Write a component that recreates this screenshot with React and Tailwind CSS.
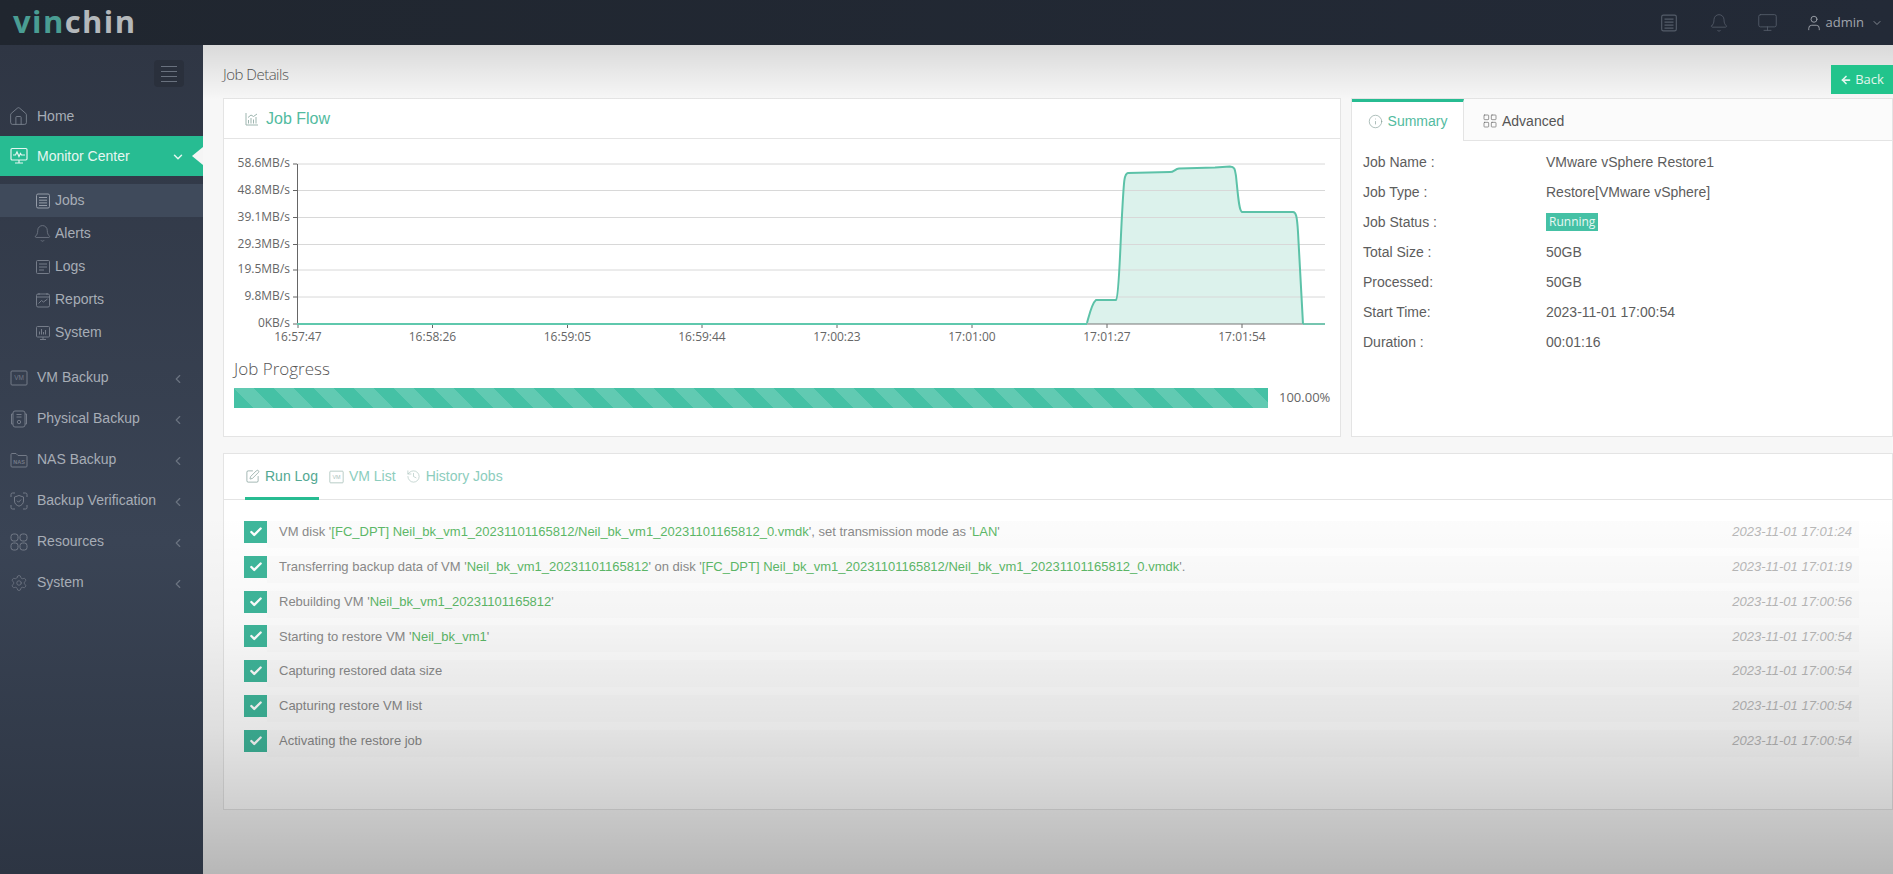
import {
  House, Bell, Settings, ChevronDown, ChevronLeft, User, Monitor, Info, LayoutGrid, SquarePen, History, ArrowLeft, Check,
} from "lucide-react"

const GRID_Y = [164, 190.5, 217.5, 244.5, 270, 297, 324]
const Y_LABELS = ["58.6MB/s", "48.8MB/s", "39.1MB/s", "29.3MB/s", "19.5MB/s", "9.8MB/s", "0KB/s"]
const X_LABELS = [
  ["16:57:47", 298], ["16:58:26", 432.5], ["16:59:05", 567.5], ["16:59:44", 702], ["17:00:23", 837], ["17:01:00", 972], ["17:01:27", 1107], ["17:01:54", 1242],
]

const CURVE = "M1087 323 C1090 312 1092 303 1096 300 L1116 300 C1119 298 1120 250 1122 215 C1124 180 1124 174 1128 173 L1170 172 C1174 172 1175 169 1179 168.5 L1215 167.5 L1230 166.5 C1235 166.5 1235 170 1236 176 C1238 195 1239 211 1242 212 L1293 212 C1296 212 1297 216 1298 232 L1303 324"

function JobsIcon({ className }) {
  return (
    <svg viewBox="0 0 16 16" fill="none" stroke="currentColor" strokeWidth="1" className={className}>
      <rect x="1.5" y="1" width="13" height="14" rx="1.5" />
      <path d="M4 4.5h8M4 7.2h8M4 9.9h8M4 12.5h8" />
    </svg>
  )
}

function LogsIcon({ className }) {
  return (
    <svg viewBox="0 0 16 16" fill="none" stroke="currentColor" strokeWidth="1" className={className}>
      <rect x="1.5" y="1.5" width="13" height="13" rx="1" />
      <path d="M4 5h8M4 8h8M4 11h5" />
    </svg>
  )
}

function ReportsIcon({ className }) {
  return (
    <svg viewBox="0 0 16 16" fill="none" stroke="currentColor" strokeWidth="1" className={className}>
      <rect x="1.5" y="2" width="13" height="13" rx="1.5" />
      <path d="M1.5 5h13M4 1v2M12 1v2M3.5 11.5l3-3 2 1.5 4-3" />
    </svg>
  )
}

function SystemSmallIcon({ className }) {
  return (
    <svg viewBox="0 0 16 16" fill="none" stroke="currentColor" strokeWidth="1" className={className}>
      <rect x="1.5" y="1.5" width="13" height="10.5" rx="1" />
      <path d="M8 12v2.5M5 14.5h6M4.5 9.5V6.5M6.5 9.5V4M8.5 9.5V7M10.5 9.5V5" />
    </svg>
  )
}

function MonitorPulse({ className }) {
  return (
    <svg viewBox="0 0 18 18" fill="none" stroke="currentColor" strokeWidth="1.2" className={className}>
      <rect x="1" y="1.5" width="16" height="11.5" rx="1.2" />
      <path d="M9 13v2.5M5 16h8M3 8h2.5l1.5-3 2 4.5 1.5-3 1 1.5h3.5" />
    </svg>
  )
}

function VmIcon({ className }) {
  return (
    <svg viewBox="0 0 18 16" fill="none" stroke="currentColor" strokeWidth="1" className={className}>
      <rect x="1" y="1" width="16" height="14" rx="1" />
      <text x="9" y="10.2" textAnchor="middle" fontSize="6.5" fontFamily="Liberation Sans" fill="currentColor" stroke="none">VM</text>
    </svg>
  )
}

function PhysicalIcon({ className }) {
  return (
    <svg viewBox="0 0 18 18" fill="none" stroke="currentColor" strokeWidth="1" className={className}>
      <rect x="3" y="1" width="12" height="16" rx="2" />
      <path d="M3 4H1.5v10H3M15 4h1.5v10H15M6.5 4.5h5M6.5 7h5" />
      <circle cx="9" cy="12" r="1.7" />
    </svg>
  )
}

function NasIcon({ className }) {
  return (
    <svg viewBox="0 0 18 16" fill="none" stroke="currentColor" strokeWidth="1" className={className}>
      <path d="M1 14V2.5A1 1 0 0 1 2 1.5h4l2 2h8a1 1 0 0 1 1 1V14a1 1 0 0 1-1 1H2a1 1 0 0 1-1-1z" />
      <text x="9" y="11.5" textAnchor="middle" fontSize="5.5" fontWeight="700" fontFamily="Liberation Sans" fill="currentColor" stroke="none">NAS</text>
    </svg>
  )
}

function VerifyIcon({ className }) {
  return (
    <svg viewBox="0 0 18 18" fill="none" stroke="currentColor" strokeWidth="1" className={className}>
      <path d="M1 5V2.5A1.5 1.5 0 0 1 2.5 1H5M13 1h2.5A1.5 1.5 0 0 1 17 2.5V5M17 13v2.500a1.5 1.5 0 0 1-1.5 1.5H13M5 17H2.5A1.5 1.5 0 0 1 1 15.5V13" />
      <path d="M9 3.5l4.5 1.5v4c0 2.800-2 4.300-4.500 5.200C6.500 13.300 4.500 11.800 4.500 9V5z" />
      <path d="M7 8.700l1.500 1.500 2.700-2.700" />
    </svg>
  )
}

function ResourcesIcon({ className }) {
  return (
    <svg viewBox="0 0 18 18" fill="none" stroke="currentColor" strokeWidth="1" className={className}>
      <rect x="1" y="1" width="7" height="7" rx="2.5" />
      <rect x="10" y="1" width="7" height="7" rx="2.5" />
      <rect x="1" y="10" width="7" height="7" rx="2.5" />
      <rect x="10" y="10" width="7" height="7" rx="2.5" />
    </svg>
  )
}

function FlowIcon({ className }) {
  return (
    <svg viewBox="0 0 14 14" fill="none" stroke="currentColor" strokeWidth="1" className={className}>
      <path d="M1 1v12h12" />
      <path d="M3.5 11.5V8M6 11.5V6M8.5 11.5V7.5M11 11.5V5" />
      <path d="M3 5.5l3-2.500 2.500 1.500L12 2" />
    </svg>
  )
}

function Sidebar() {
  const subItems = [
    { label: "Alerts", icon: Bell, cls: "h-[19px] w-[19px] -mx-[2px]" },
    { label: "Logs", icon: LogsIcon, cls: "h-[16px] w-[16px] mr-[-1px]" },
    { label: "Reports", icon: ReportsIcon, cls: "h-[16px] w-[16px] mr-[-1px]" },
    { label: "System", icon: SystemSmallIcon, cls: "h-[16px] w-[16px] mr-[-1px]" },
  ]
  const groups = [
    { label: "VM Backup", icon: VmIcon },
    { label: "Physical Backup", icon: PhysicalIcon },
    { label: "NAS Backup", icon: NasIcon },
    { label: "Backup Verification", icon: VerifyIcon },
    { label: "Resources", icon: ResourcesIcon },
    { label: "System", icon: Settings },
  ]

  return (
    <aside className="w-[203px] shrink-0 bg-gradient-to-b from-[#2f3644] via-[#3a4455] via-60% to-[#2d3543] text-[14px] text-[#a7adb6]">
      <div className="flex justify-end pr-[19px] pt-[15px]">
        <div className="flex h-[27px] w-[30px] flex-col items-center justify-center gap-[4px] rounded-sm bg-[#2a303c]">
          <span className="h-px w-[16px] bg-[#69717e]" />
          <span className="h-px w-[16px] bg-[#69717e]" />
          <span className="h-px w-[16px] bg-[#69717e]" />
          <span className="h-px w-[16px] bg-[#69717e]" />
        </div>
      </div>

      <div className="mt-[9px] flex h-[40px] items-center pl-[8px]">
        <House size={21} strokeWidth={1} className="text-[#7c8390]" />
        <span className="ml-[8px]">Home</span>
      </div>

      <div className="relative flex h-[40px] items-center bg-[#27bc92] pl-[10px] text-[#e6f6f1]">
        <MonitorPulse className="h-[18px] w-[18px]" />
        <span className="ml-[9px]">Monitor Center</span>
        <ChevronDown size={14} strokeWidth={2.5} className="absolute left-[171px] top-[14px]" />
        <span className="absolute right-0 top-[11px] h-0 w-0 border-y-[9px] border-r-[11px] border-y-transparent border-r-[#f5f5f5]" />
      </div>

      <div className="mt-[8px] flex h-[33px] items-center bg-[#3f4a5b] pl-[35px]">
        <JobsIcon className="mr-[-1px] h-[16px] w-[16px] text-[#949ba7]" />
        <span className="ml-[5px]">Jobs</span>
      </div>
      {subItems.map((item) => (
        <div key={item.label} className="flex h-[33px] items-center pl-[35px]">
          <item.icon strokeWidth={1} className={`${item.cls} text-[#757c89]`} />
          <span className="ml-[5px]">{item.label}</span>
        </div>
      ))}

      <div className="mt-[8px]">
        {groups.map((item) => (
          <div key={item.label} className="relative flex h-[41px] items-center pl-[10px]">
            <item.icon strokeWidth={1} className="h-[18px] w-[18px] text-[#737a87]" />
            <span className="ml-[9px]">{item.label}</span>
            <ChevronLeft size={14} strokeWidth={2} className="absolute left-[171px] top-[15px] text-[#6b7380]" />
          </div>
        ))}
      </div>
    </aside>
  )
}

function JobChart() {
  return (
    <svg width="1116" height="215" viewBox="224 139 1116 215" className="block">
      <path d={`${CURVE} L1087 324 Z`} fill="#dcf2ec" />
      {GRID_Y.slice(0, 6).map((y) => (
        <line key={y} x1="297" x2="1325" y1={y} y2={y} stroke="#d8d8d8" strokeWidth="1" />
      ))}
      <line x1="297.5" x2="297.5" y1="164" y2="324" stroke="#666" strokeWidth="1" />
      {GRID_Y.map((y, i) => (
        <g key={y}>
          <line x1="293" x2="297" y1={y} y2={y} stroke="#666" />
          <text x="290" y={y + 3} textAnchor="end" fontSize="12" fontFamily="Open Sans" fill="#666">{Y_LABELS[i]}</text>
        </g>
      ))}
      {X_LABELS.map(([label, x]) => (
        <g key={label}>
          <line x1={x} x2={x} y1="324" y2="328" stroke="#666" />
          <text x={x} y="341" textAnchor="middle" fontSize="12" fontFamily="Open Sans" fill="#666">{label}</text>
        </g>
      ))}
      <line x1="297" x2="1087" y1="324" y2="324" stroke="#5fc8ad" strokeWidth="2" />
      <line x1="1087" x2="1325" y1="324" y2="324" stroke="#777" strokeWidth="1" />
      <line x1="1303" x2="1325" y1="324" y2="324" stroke="#5fc8ad" strokeWidth="1.5" />
      <path d={CURVE} fill="none" stroke="#5cc2a8" strokeWidth="2" />
    </svg>
  )
}

function JobFlowCard() {
  return (
    <div className="w-[1118px] shrink-0 border border-[#e4e4e4] bg-white">
      <div className="flex h-[40px] items-center gap-[7px] border-b border-[#e4e4e4] pl-[21px]">
        <FlowIcon className="h-[14px] w-[14px] text-[#9db5af]" />
        <span className="text-[16px] text-[#52bba0]">Job Flow</span>
      </div>
      <JobChart />
      <div className="mt-[4px] pl-[10px] font-['Open_Sans',sans-serif] text-[17px] font-light leading-[22px] text-[#555]">Job Progress</div>
      <div className="mt-[8px] flex items-center pl-[10px]">
        <div className="h-[20px] w-[1034px] bg-[#45c1a5] bg-[linear-gradient(45deg,rgba(255,255,255,0.15)_25%,transparent_25%,transparent_50%,rgba(255,255,255,0.15)_50%,rgba(255,255,255,0.15)_75%,transparent_75%,transparent)] bg-[length:40px_40px]" />
        <span className="ml-[11px] font-['Open_Sans',sans-serif] text-[13px] text-[#666]">100.00%</span>
      </div>
    </div>
  )
}

function SummaryCard() {
  const rows = [
    ["Job Name :", "VMware vSphere Restore1"],
    ["Job Type :", "Restore[VMware vSphere]"],
    ["Job Status :", null],
    ["Total Size :", "50GB"],
    ["Processed:", "50GB"],
    ["Start Time:", "2023-11-01 17:00:54"],
    ["Duration :", "00:01:16"],
  ]
  return (
    <div className="flex-1 border border-[#e4e4e4] bg-white">
      <div className="flex h-[42px] border-b border-[#e4e4e4] bg-[#fbfbfb] text-[14px]">
        <div className="-mb-px flex w-[112px] items-center justify-center gap-[5px] border-r border-t-[3px] border-[#e4e4e4] border-t-[#27bc92] bg-white text-[#52bba0]">
          <Info size={15} strokeWidth={1} className="text-[#7f9a94]" />
          Summary
        </div>
        <div className="flex items-center gap-[4px] pl-[18px] pt-[3px] text-[#555]">
          <LayoutGrid size={16} strokeWidth={1} className="text-[#666]" />
          Advanced
        </div>
      </div>
      <div className="pl-[11px] pt-[6px] text-[14px] text-[#5d5d5d]">
        {rows.map(([label, value]) => (
          <div key={label} className="flex h-[30px] items-center">
            <span className="w-[183px] shrink-0">{label}</span>
            {value ?? (
              <span className="flex h-[18px] items-center bg-[#45c1a5] px-[3px] font-['Open_Sans',sans-serif] text-[12px] text-[#e9f8f3]">Running</span>
            )}
          </div>
        ))}
      </div>
    </div>
  )
}

function Hl({ children }) {
  return <span className="text-[#5cb868]">{children}</span>
}

const LOGS = [
  [<>VM disk '<Hl>[FC_DPT] Neil_bk_vm1_20231101165812/Neil_bk_vm1_20231101165812_0.vmdk</Hl>', set transmission mode as '<Hl>LAN</Hl>'</>, "2023-11-01 17:01:24"],
  [<>Transferring backup data of VM '<Hl>Neil_bk_vm1_20231101165812</Hl>' on disk '<Hl>[FC_DPT] Neil_bk_vm1_20231101165812/Neil_bk_vm1_20231101165812_0.vmdk</Hl>'.</>, "2023-11-01 17:01:19"],
  [<>Rebuilding VM '<Hl>Neil_bk_vm1_20231101165812</Hl>'</>, "2023-11-01 17:00:56"],
  [<>Starting to restore VM '<Hl>Neil_bk_vm1</Hl>'</>, "2023-11-01 17:00:54"],
  [<>Capturing restored data size</>, "2023-11-01 17:00:54"],
  [<>Capturing restore VM list</>, "2023-11-01 17:00:54"],
  [<>Activating the restore job</>, "2023-11-01 17:00:54"],
]

function RunLogCard() {
  return (
    <div className="mt-[16px] h-[357px] border border-[#e4e4e4] bg-white">
      <div className="flex h-[46px] items-end gap-[10px] border-b border-[#e4e4e4] pl-[21px] text-[14px]">
        <div className="-mb-px flex h-[45px] items-center gap-[5px] border-b-[3px] border-[#27bc92] pr-[1px] pt-[1px] text-[#52a892]">
          <SquarePen size={15} strokeWidth={1} className="text-[#6f8f88]" />
          Run Log
        </div>
        <div className="-mb-px flex h-[45px] items-center gap-[5px] pb-[2px] text-[#8ccdbd]">
          <VmIcon className="h-[14px] w-[15px] text-[#a9c2bc]" />
          VM List
        </div>
        <div className="-mb-px flex h-[45px] items-center gap-[5px] pb-[2px] text-[#8ccdbd]">
          <History size={15} strokeWidth={1} className="text-[#a9c2bc]" />
          History Jobs
        </div>
      </div>
      <div className="pl-[20px] pr-[33px] pt-[21px] text-[13px] text-[#8a8a8a]">
        {LOGS.map(([text, time], i) => (
          <div key={i} className="mb-[7.8px] flex h-[27px] items-start">
            <span className="flex h-[22px] w-[23px] shrink-0 items-center justify-center bg-[#3fb79b]">
              <Check size={14} strokeWidth={4} className="text-white" />
            </span>
            <div className="flex h-[27px] flex-1 items-center justify-between bg-[#fafafa]/60 pb-[5px] pl-[12px] pr-[7px]">
              <span>{text}</span>
              <span className="italic text-[#b8b8b8]">{time}</span>
            </div>
          </div>
        ))}
      </div>
    </div>
  )
}

export default function App() {
  return (
    <div className="relative flex h-[874px] w-full flex-col overflow-hidden bg-[#f5f5f5] font-['Liberation_Sans',Arial,sans-serif]">
      <header className="flex h-[45px] shrink-0 justify-between bg-gradient-to-r from-[#20262f] to-[#232a37] pl-[13px] pr-[10px]">
        <div className="font-['Open_Sans',sans-serif] text-[31px] font-bold leading-[43px] tracking-[1.4px]">
          <span className="text-[#4a9d93]">vin</span>
          <span className="text-[#b4b8bb]">chin</span>
        </div>
        <div className="flex items-center text-[#545c69]">
          <JobsIcon className="h-[18px] w-[18px]" />
          <Bell size={20} strokeWidth={1} className="ml-[31px]" />
          <Monitor size={21} strokeWidth={1} className="ml-[28px]" />
          <User size={18} strokeWidth={1.2} className="ml-[27px] text-[#a0a5ad]" />
          <span className="ml-[3px] font-['Open_Sans',sans-serif] text-[13px] text-[#a0a5ad]">admin</span>
          <ChevronDown size={12} strokeWidth={1.5} className="ml-[7px] text-[#a0a5ad]" />
        </div>
      </header>

      <div className="flex flex-1">
        <Sidebar />

        <main className="relative flex-1 bg-[#f7f7f7]">
          <div className="flex h-[53px] items-start justify-between pl-[20px]">
            <h1 className="pt-[18px] font-['Open_Sans',sans-serif] text-[15px] font-light tracking-[-0.5px] text-[#555]">Job Details</h1>
            <button className="relative z-10 mt-[20px] flex h-[29px] w-[62px] items-center justify-center gap-[3px] bg-[#22c48c] font-['Open_Sans',sans-serif] text-[13px] text-[#e2f6ee]">
              <ArrowLeft size={12} strokeWidth={3.5} />
              Back
            </button>
          </div>
          <div className="pl-[20px]">
            <div className="flex h-[339px] gap-[10px]">
              <JobFlowCard />
              <SummaryCard />
            </div>
            <RunLogCard />
          </div>
        </main>
      </div>

      {/* video fade over the page */}
      <div className="pointer-events-none absolute left-[203px] right-0 top-[45px] h-[55px] bg-gradient-to-b from-black/12 to-transparent" />
      <div className="pointer-events-none absolute bottom-0 left-[203px] right-0 h-[360px] bg-[linear-gradient(to_bottom,transparent_0%,rgba(0,0,0,0.03)_30%,rgba(0,0,0,0.1)_60%,rgba(0,0,0,0.19)_82%,rgba(0,0,0,0.26)_100%)]" />
    </div>
  )
}
